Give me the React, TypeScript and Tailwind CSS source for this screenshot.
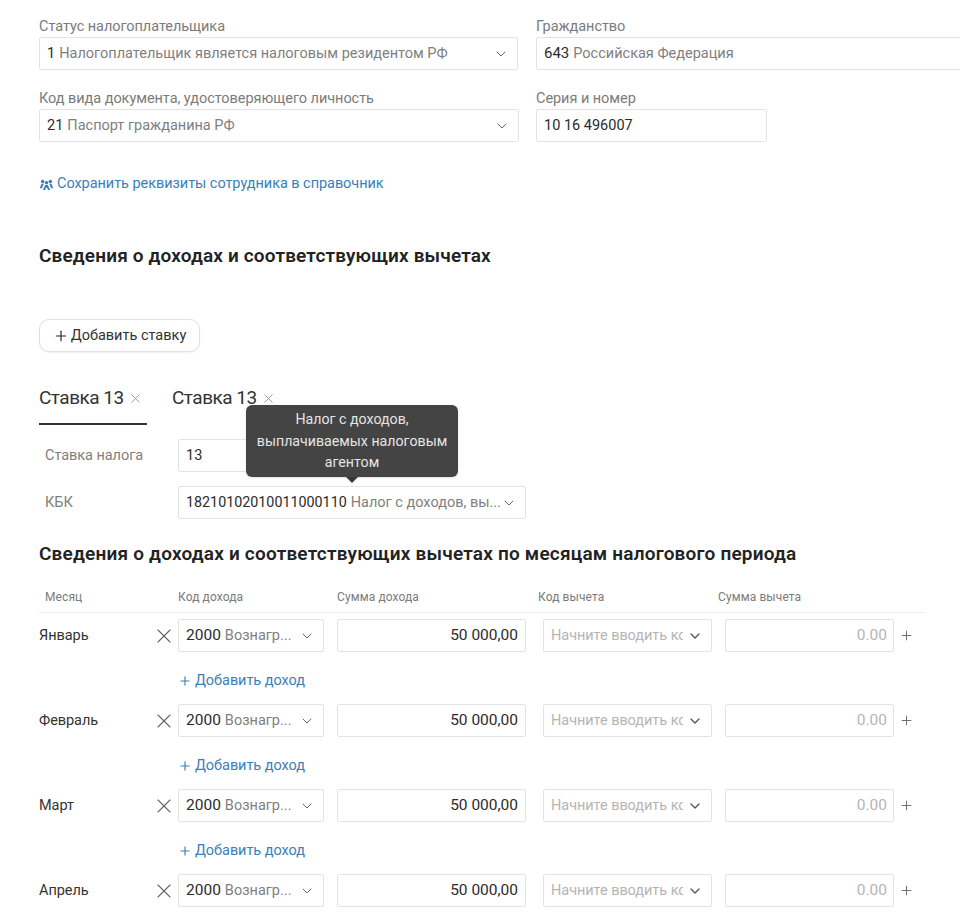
import { ChevronDown, Plus, X } from "lucide-react";

const months = ["Январь", "Февраль", "Март", "Апрель"];

interface FieldProps {
  code: string;
  text?: string;
  width: string;
  chevron?: boolean;
  codeClass?: string;
}

function Field({ code, text, width, chevron = true, codeClass = "text-[14.5px]" }: FieldProps) {
  return (
    <div className={`${width} h-[33px] shrink-0 flex items-center pl-[7px] pr-[8px] bg-white border border-[#e3e3e3] rounded-[2px] text-[14.5px] whitespace-nowrap overflow-hidden`}>
      <span className={`${codeClass} text-[#2b2b2b]`}>{code}</span>
      {text && <span className="ml-1 text-[#7f7f7f] truncate min-w-0">{text}</span>}
      {chevron && <ChevronDown className="ml-auto shrink-0 w-[16px] h-[16px] text-[#666666]" strokeWidth={1.5} />}
    </div>
  );
}

function LabeledField({ label, children }: { label: string; children: React.ReactNode }) {
  return (
    <div>
      <div className="h-[21px] text-[14.5px] leading-[21px] text-[#7b7b7b] tracking-[-0.05px] whitespace-nowrap">{label}</div>
      {children}
    </div>
  );
}

function SumInput({ value, width, muted }: { value: string; width: string; muted?: boolean }) {
  return (
    <div className={`${width} h-[33px] shrink-0 flex items-center justify-end bg-white border border-[#e3e3e3] rounded-[2px] text-[15.5px] ${muted ? "pr-[6px] text-[#b5b5b5]" : "pr-[7px] text-[#2b2b2b]"}`}>
      {value}
    </div>
  );
}

function MonthRow({ month, last }: { month: string; last?: boolean }) {
  return (
    <div className={last ? "" : "h-[85px]"}>
      <div className="flex items-center">
        <div className="w-[113px] text-[14.5px] text-[#333333] tracking-[-0.05px]">{month}</div>
        <X className="w-[24px] h-[24px] mr-[2px] text-[#666666]" strokeWidth={1.1} />
        <Field code="2000" text="Вознагр..." width="w-[146px]" codeClass="text-[15.5px]" />
        <div className="w-[13px]" />
        <SumInput value="50 000,00" width="w-[189px]" />
        <div className="w-[17px]" />
        <div className="w-[169px] h-[33px] shrink-0 flex items-center pl-[7px] pr-[8px] bg-white border border-[#e3e3e3] rounded-[2px] text-[14.5px] text-[#b5b5b5] tracking-[-0.05px] whitespace-nowrap">
          <span className="w-[132px] overflow-hidden">Начните вводить код</span>
          <ChevronDown className="ml-auto shrink-0 w-[16px] h-[16px] text-[#555555]" strokeWidth={2} />
        </div>
        <div className="w-[13px]" />
        <SumInput value="0.00" width="w-[169px]" muted />
        <Plus className="ml-[5px] w-[15px] h-[15px] text-[#666666]" strokeWidth={1.5} />
      </div>
      {!last && (
        <div className="ml-[139px] mt-[18px] flex items-center text-[14.5px] text-[#3b7fb8] tracking-[-0.05px]">
          <Plus className="w-[14px] h-[14px] mr-[3px]" strokeWidth={2} />
          Добавить доход
        </div>
      )}
    </div>
  );
}

export default function App() {
  return (
    <div className="relative h-[921px] overflow-hidden bg-white pl-[39px] pt-[16px] font-['Roboto',sans-serif]">
      {/* Payer */}
      <div className="flex gap-[18px] w-[960px]">
        <LabeledField label="Статус налогоплательщика">
          <Field code="1" text="Налогоплательщик является налоговым резидентом РФ" width="w-[479px]" />
        </LabeledField>
        <LabeledField label="Гражданство">
          <Field code="643" text="Российская Федерация" width="w-[440px]" chevron={false} codeClass="text-[15px]" />
        </LabeledField>
      </div>
      <div className="flex gap-[17px] mt-[18px]">
        <LabeledField label="Код вида документа, удостоверяющего личность">
          <Field code="21" text="Паспорт гражданина РФ" width="w-[480px]" />
        </LabeledField>
        <LabeledField label="Серия и номер">
          <Field code="10 16 496007" width="w-[231px]" chevron={false} />
        </LabeledField>
      </div>

      <div className="mt-[32px] flex items-center h-[20px] text-[14.5px] text-[#3b7fb8] tracking-[-0.05px]">
        <svg viewBox="0 0 16 12" className="w-[15px] h-[11px] mr-[3px]" fill="currentColor">
          <circle cx="3.8" cy="2.6" r="1.9" />
          <circle cx="12.2" cy="2.6" r="1.9" />
          <circle cx="8" cy="4" r="1.9" />
          <path d="M2.6 5.2h2.4L3 10.2H0.6zM11 5.2h2.4l2 5h-2.4zM6.6 6.6h2.8L12 12H9.8L8 8.8 6.2 12H4z" />
        </svg>
        Сохранить реквизиты сотрудника в справочник
      </div>

      <h2 className="mt-[50px] h-[24px] text-[19px] leading-[24px] font-semibold text-[#222222] tracking-[0.15px] whitespace-nowrap">
        Сведения о доходах и соответствующих вычетах
      </h2>

      <button className="mt-[51px] w-[161px] h-[33px] flex items-center justify-center border border-[#e0e0e0] rounded-[10px] bg-white text-[14.5px] text-[#333333] shadow-[0_1px_2px_rgba(0,0,0,0.06)]">
        <Plus className="w-[16px] h-[16px] mr-[2px] text-[#222222]" strokeWidth={1.7} />
        Добавить ставку
      </button>

      {/* Tabs */}
      <div className="mt-[31px] flex text-[19px] leading-[30px] tracking-[-0.5px] text-[#333333] whitespace-nowrap">
        <div className="w-[108px] h-[42px] border-b-2 border-[#333333] flex items-start">
          Ставка 13
          <X className="ml-[4px] mt-[8px] w-[15px] h-[15px] text-[#8a8a8a]" strokeWidth={1.3} />
        </div>
        <div className="ml-[25px] flex items-start">
          Ставка 13
          <X className="ml-[4px] mt-[8px] w-[15px] h-[15px] text-[#8a8a8a]" strokeWidth={1.3} />
        </div>
      </div>

      {/* Rate */}
      <div className="mt-[14px] flex items-center">
        <div className="w-[139px] pl-[6px] text-[14.5px] text-[#808080] tracking-[-0.05px]">Ставка налога</div>
        <Field code="13" width="w-[146px]" />
      </div>
      <div className="mt-[14px] flex items-center">
        <div className="w-[139px] pl-[6px] text-[14.5px] text-[#808080]">КБК</div>
        <Field code="18210102010011000110" text="Налог с доходов, вы..." width="w-[348px]" codeClass="text-[14.3px]" />
      </div>

      <h2 className="mt-[23px] h-[24px] text-[19px] leading-[24px] font-semibold text-[#222222] tracking-[0.2px] whitespace-nowrap">
        Сведения о доходах и соответствующих вычетах по месяцам налогового периода
      </h2>

      {/* Table head */}
      <div className="mt-[23px] w-[885px] h-[24px] flex border-b border-[#ebebeb] text-[12px] leading-[16px] text-[#7b7b7b] tracking-[0.1px]">
        <div className="w-[139px] pl-[6px]">Месяц</div>
        <div className="w-[159px]">Код дохода</div>
        <div className="w-[201px]">Сумма дохода</div>
        <div className="w-[180px]">Код вычета</div>
        <div>Сумма вычета</div>
      </div>

      <div className="mt-[6px]">
        {months.map((m, i) => (
          <MonthRow key={m} month={m} last={i === months.length - 1} />
        ))}
      </div>

      {/* Tooltip */}
      <div className="absolute left-[246px] top-[405px] w-[212px] h-[72px] rounded-[6px] bg-[#3a3a3a]/95 text-center text-[14.2px] leading-[21.5px] pt-[4px] text-[#e4e4e4] shadow-sm">
        Налог с доходов,
        <br />
        выплачиваемых налоговым
        <br />
        агентом
        <div className="absolute left-[100px] top-[72px] border-x-[6px] border-x-transparent border-t-[6px] border-t-[#3a3a3a]" />
      </div>
    </div>
  );
}
